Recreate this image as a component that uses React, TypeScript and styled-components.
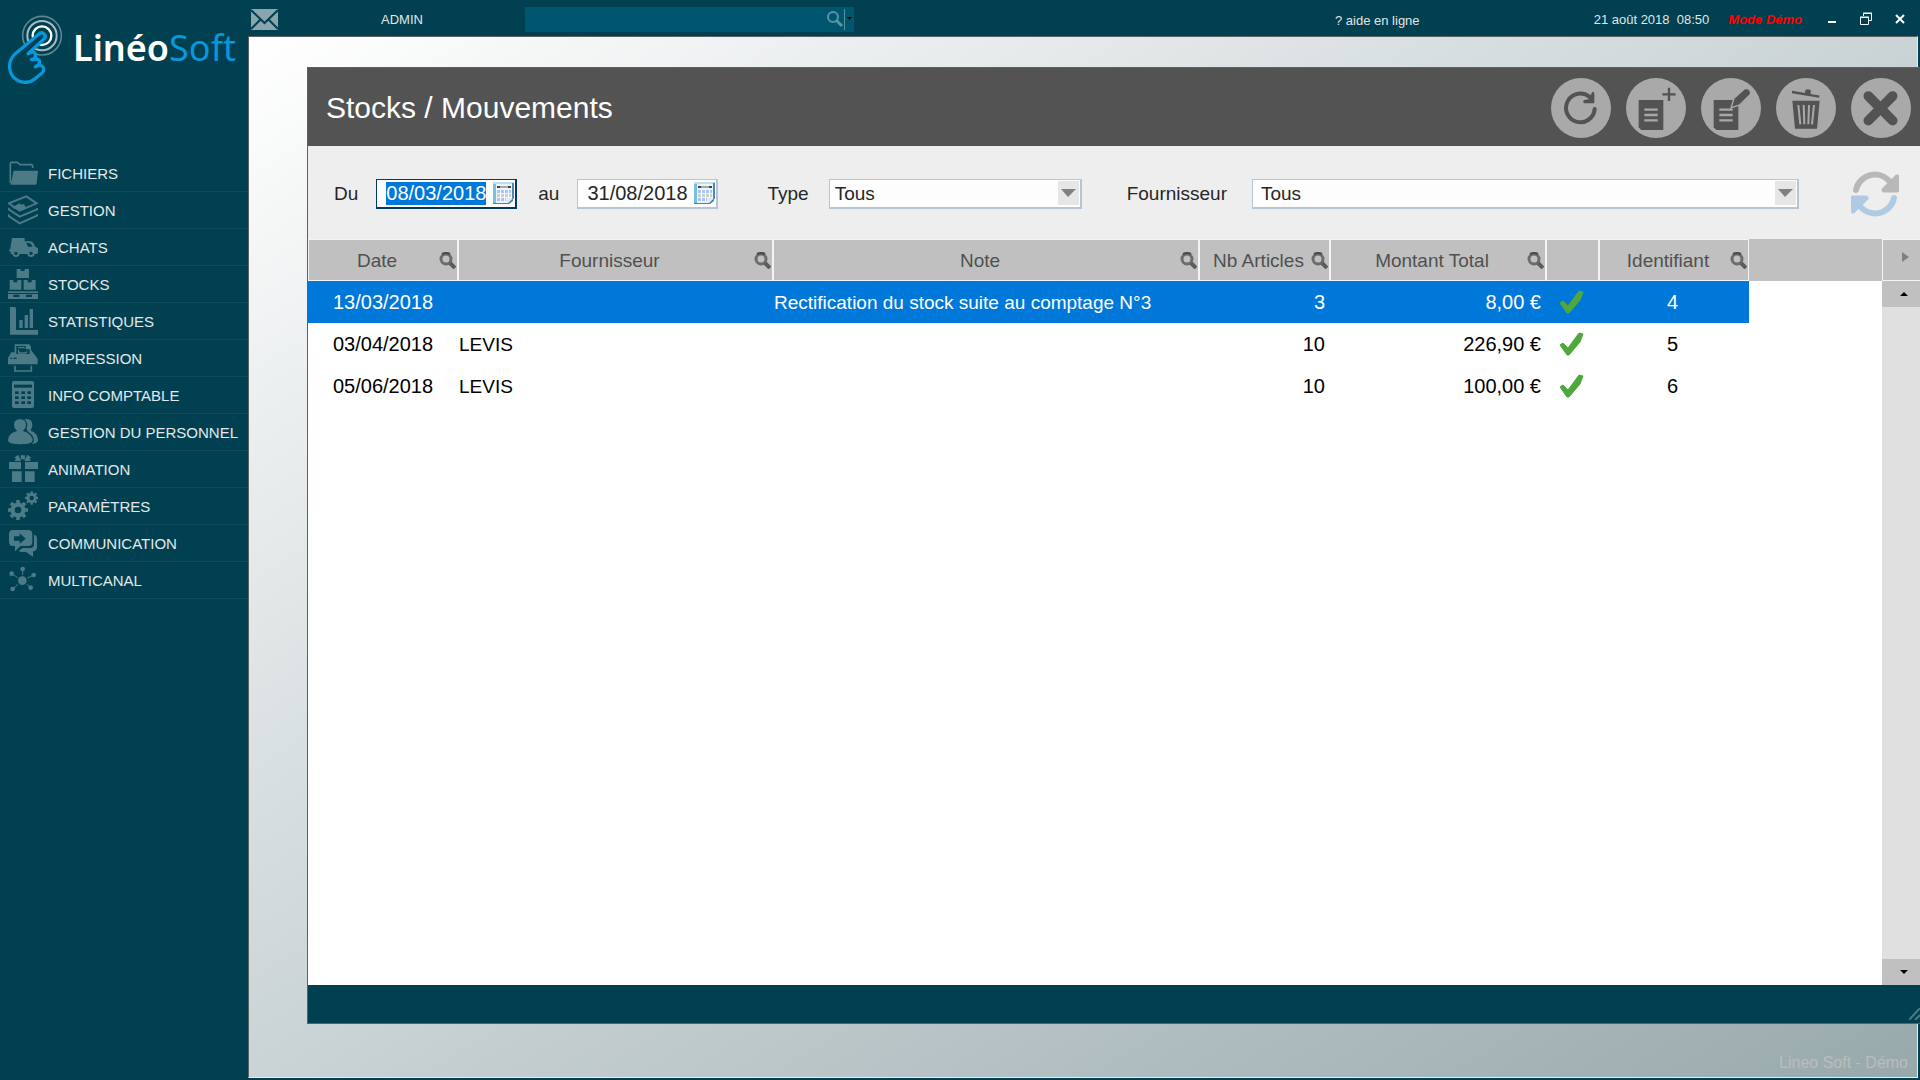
import React, { useEffect, useRef } from "react";
import styled, { createGlobalStyle, css } from "styled-components";

const color = {
  petrol: "#004050",
  petrolLine: "#0d4b5b",
  sideIcon: "#4d7a87",
  edge: "#5c6163",
  bar: "#535353",
  panel: "#eeeeee",
  grid: "#c0c0c0",
  gridText: "#505050",
  select: "#0078d9",
  field: "#b7c4d1",
};

const GlobalStyle = createGlobalStyle`
  * { box-sizing: border-box; }
  body {
    margin: 0;
    background: ${color.petrol};
    font-family: "Liberation Sans", Arial, sans-serif;
    overflow: hidden;
  }
  button {
    font: inherit;
    color: inherit;
    border: 0;
    padding: 0;
    background: none;
    cursor: pointer;
  }
  svg { display: block; }
`;

/* ---------- shell ---------- */

const Shell = styled.div`
  display: grid;
  grid-template-columns: 248px minmax(0, 1fr);
  min-height: 100vh;
`;

const Main = styled.div`
  display: flex;
  flex-direction: column;
  min-width: 0;
`;

/* ---------- sidebar ---------- */

const Sidebar = styled.aside`
  display: flex;
  flex-direction: column;
`;

const Brand = styled.div`
  display: flex;
  align-items: flex-start;
  gap: 9px;
  height: 155px;
  padding: 14px 0 0 7px;
`;

const BrandName = styled.div`
  padding-top: 8px;
  font-family: "Noto Sans", "Open Sans", sans-serif;
  font-size: 36px;
  line-height: 52px;
  font-weight: 600;
  color: #fff;
`;

const BrandAccent = styled.span`
  font-weight: 400;
  color: #0797db;
`;

const Menu = styled.nav`
  display: flex;
  flex-direction: column;
`;

const MenuItem = styled.a`
  display: flex;
  align-items: center;
  gap: 10px;
  height: 37px;
  padding-left: 8px;
  border-bottom: 1px solid ${color.petrolLine};
  color: #e4e8ea;
  font-size: 15px;
  text-decoration: none;
  white-space: nowrap;
`;

/* ---------- top bar ---------- */

const TopBar = styled.header`
  display: flex;
  align-items: center;
  height: 36px;
  padding: 2px 15px 0 3px;
  color: #e0e6e8;
  font-size: 13px;
`;

const UserName = styled.span`
  width: 144px;
  margin-left: 103px;
`;

const SearchBox = styled.label`
  display: flex;
  align-items: center;
  width: 329px;
  height: 25px;
  background: #00566e;
`;

const SearchInput = styled.input`
  flex: 1;
  min-width: 0;
  height: 100%;
  padding: 0 8px;
  border: 0;
  outline: 0;
  background: transparent;
  color: #fff;
  font: inherit;
`;

const HelpLink = styled.a`
  margin: 2px auto 0 481px;
  color: inherit;
  text-decoration: none;
`;

const Clock = styled.time`
  margin-right: 19px;
  white-space: pre;
`;

const DemoMode = styled.strong`
  margin-right: 25px;
  color: #ff0000;
  font-style: italic;
`;

const WindowButtons = styled.div`
  display: flex;
  gap: 22px;
`;

/* ---------- work area ---------- */

const Workspace = styled.main`
  flex: 1;
  display: flex;
  flex-direction: column;
  margin: 0 2px 2px 0;
  padding: 30px 0 0 58px;
  border: 1px solid ${color.edge};
  border-right-color: #e8eef0;
  border-bottom-color: #e8eef0;
  background: linear-gradient(to bottom right, #ffffff, #cad3d5 50%, #98a9ac);
`;

const Watermark = styled.footer`
  height: 53px;
  padding-right: 9px;
  color: #bcbcbc;
  font-size: 16px;
  line-height: 78px;
  text-align: right;
`;

const Panel = styled.section`
  flex: 1;
  display: flex;
  flex-direction: column;
  margin-right: -3px;
  border: 1px solid ${color.edge};
  border-right: 0;
  background: #fff;
`;

const PanelHeader = styled.div`
  display: flex;
  align-items: center;
  justify-content: space-between;
  height: 78px;
  padding: 1px 9px 0 18px;
  background: ${color.bar};
`;

const PanelTitle = styled.h1`
  margin: 0;
  color: #fff;
  font-size: 30px;
  font-weight: 400;
`;

const ActionGroup = styled.div`
  display: flex;
  gap: 15px;
`;

const RoundButton = styled.button`
  width: 60px;
  height: 60px;
  border-radius: 50%;
  background: #a9a9a9;
`;

const PanelFooter = styled.div`
  display: flex;
  align-items: flex-end;
  justify-content: flex-end;
  height: 38px;
  padding-bottom: 3px;
  background: ${color.petrol};
`;

/* ---------- filters ---------- */

const Filters = styled.form`
  display: flex;
  align-items: center;
  height: 93px;
  padding: 2px 21px 0 26px;
  background: ${color.panel};
  color: #262626;
  font-size: 19px;
`;

const FilterGroup = styled.div<{ $gap: number; $after: number; $grow?: boolean }>`
  display: flex;
  align-items: center;
  gap: ${(p) => p.$gap}px;
  margin-right: ${(p) => p.$after}px;
  flex: ${(p) => (p.$grow ? "1" : "none")};
`;

const fieldFrame = css<{ $active?: boolean }>`
  height: 30px;
  border: solid ${(p) => (p.$active ? "#053a5f" : color.field)};
  border-width: 1px 2px 2px 1px;
  background: #fdfdfd;
`;

const DateField = styled.div<{ $active?: boolean }>`
  ${fieldFrame}
  display: flex;
  align-items: center;
  width: 141px;
`;

const DateInput = styled.input`
  flex: 1;
  min-width: 0;
  height: 23px;
  padding: 0 0 0 9px;
  border: 0;
  outline: 0;
  background: transparent;
  color: #262626;
  font: 20px "Liberation Sans", Arial, sans-serif;
  &::selection {
    background: ${color.select};
    color: #fff;
  }
`;

const SelectField = styled.div<{ $wide?: boolean }>`
  ${fieldFrame}
  display: grid;
  flex: ${(p) => (p.$wide ? "1" : "none")};
  width: ${(p) => (p.$wide ? "auto" : "253px")};
`;

const Select = styled.select<{ $indent: number }>`
  grid-area: 1 / 1;
  appearance: none;
  width: 100%;
  padding: 0 30px 0 ${(p) => p.$indent}px;
  border: 0;
  outline: 0;
  background: transparent;
  color: #262626;
  font: 19px "Liberation Sans", Arial, sans-serif;
`;

const SelectArrow = styled.span`
  grid-area: 1 / 1;
  place-self: center end;
  display: grid;
  place-items: center;
  width: 21px;
  height: 24px;
  margin-right: 1px;
  background: #e6e6e6;
  pointer-events: none;
`;

/* ---------- table ---------- */

const TableArea = styled.div`
  flex: 1;
  display: flex;
`;

const TableScroll = styled.div`
  flex: 1;
  min-width: 0;
`;

const Table = styled.table`
  width: 100%;
  table-layout: fixed;
  border-collapse: separate;
  border-spacing: 0;
  font-size: 19px;
`;

const HeadCell = styled.th<{ $filler?: boolean }>`
  height: 42px;
  padding: 0;
  border: ${(p) => (p.$filler ? "0" : "1px solid #f4f4f4")};
  background: ${color.grid};
  color: ${color.gridText};
  font-weight: 400;
  white-space: nowrap;
`;

const HeadContent = styled.div`
  display: flex;
  align-items: center;
  padding: 1px 1px 0 6px;
`;

const HeadLabel = styled.span`
  flex: 1;
  text-align: center;
`;

const Row = styled.tr<{ $selected: boolean }>`
  color: ${(p) => (p.$selected ? "#fff" : "#000")};
  td:not(:last-child) {
    background: ${(p) => (p.$selected ? color.select : "#fff")};
  }
`;

const Cell = styled.td<{ $kind: "date" | "text" | "number" | "center" }>`
  height: 42px;
  white-space: nowrap;
  font-size: ${(p) => (p.$kind === "text" ? 19 : 20)}px;
  text-align: ${(p) => (p.$kind === "number" ? "right" : p.$kind === "center" ? "center" : "left")};
  padding: ${(p) => ({ date: "0 0 0 25px", text: "1px 0 0 1px", number: "0 5px 0 0", center: "0 3px 0 0" })[p.$kind]};
  svg { margin: 0 auto; }
`;

const ScrollColumn = styled.div`
  display: flex;
  flex-direction: column;
  width: 38px;
  background: #e0e0e0;
`;

const Corner = styled.button`
  display: grid;
  place-items: center;
  height: 42px;
  padding: 0 0 6px 8px;
  border: solid #f4f4f4;
  border-width: 1px 0 1px 1px;
  background: ${color.grid};
`;

const ScrollButton = styled.button<{ $end?: boolean }>`
  display: grid;
  place-items: center;
  height: 26px;
  padding-left: 5px;
  margin-top: ${(p) => (p.$end ? "auto" : "0")};
  background: ${color.grid};
`;

/* ---------- drawings ---------- */

const Logo = () => (
  <svg width="57" height="72" viewBox="21 39 171 216" fill="none" aria-hidden="true">
    <circle cx="126" cy="104" r="58" stroke="#5b8590" strokeWidth="5" />
    <circle cx="126" cy="104" r="44" stroke="#a5bcc3" strokeWidth="6" />
    <circle cx="126" cy="104" r="28" stroke="#fff" strokeWidth="7" />
    <path
      d="M117 98 L44 160 C20 184 26 216 44 232 C62 248 88 248 104 234 L126 216 C136 208 132 194 121 193 C112 192 108 199 106 199 C124 190 122 176 112 174 C104 172 98 178 96 178 C112 166 108 152 97 152 C90 152 86 160 84 158 L133 114 C142 104 128 90 117 98 Z"
      fill={color.petrol}
    />
    <path
      d="M84 158 L133 113 C141 104 129 90 118 98 L44 160 C22 182 26 214 42 230 C60 248 88 248 104 234 L126 216 C135 207 130 194 120 193 L106 197 M106 197 C122 190 122 178 112 174 L94 175 M98 176 C110 166 108 155 98 152 L84 158"
      stroke="#0797db"
      strokeWidth="10"
      strokeLinecap="round"
      strokeLinejoin="round"
    />
  </svg>
);

const SideIcon = ({ children }: { children: React.ReactNode }) => (
  <svg width="30" height="30" viewBox="0 0 90 90" fill={color.sideIcon} aria-hidden="true">
    {children}
  </svg>
);

const line = { fill: "none", stroke: color.sideIcon };
const cut = { fill: color.petrol };

const Gear = ({ x, y, r }: { x: number; y: number; r: number }) => (
  <g>
    {[0, 45, 90, 135].map((a) => (
      <rect
        key={a}
        x={x - r * 0.18}
        y={y - r}
        width={r * 0.36}
        height={r * 2}
        transform={`rotate(${a} ${x} ${y})`}
      />
    ))}
    <circle cx={x} cy={y} r={r * 0.76} />
    <circle cx={x} cy={y} r={r * 0.33} {...cut} />
  </g>
);

const menu: { label: string; icon: React.ReactNode }[] = [
  {
    label: "FICHIERS",
    icon: (
      <>
        <path d="M7 76V17q0-4 4-4h17l8 7h33q5 0 5 5v5" {...line} strokeWidth="5" />
        <path d="M17 38h73l-4 38q-1 4-4 4H8z" />
      </>
    ),
  },
  {
    label: "GESTION",
    icon: (
      <>
        <path d="M2 25L55 4l31 21-51 22z" {...line} strokeWidth="6" />
        <path d="M12 38l22-13 6 4 8-2 6 12-18 8z" />
        <path d="M2 38v5l33 22 52-22v-4M2 58v5l33 22 52-23v-4" {...line} strokeWidth="6" />
      </>
    ),
  },
  {
    label: "ACHATS",
    icon: (
      <>
        <path d="M12 18h38v10h18q5 0 8 5l6 12q10 2 10 9v8h-4v4H8v-8H3v-4q4-2 4-6z" />
        <path d="M55 33h9q5 0 10 11H60z" {...cut} />
        <circle cx="24" cy="64" r="11" />
        <circle cx="24" cy="64" r="5" {...cut} />
        <circle cx="69" cy="64" r="11" />
        <circle cx="69" cy="64" r="5" {...cut} />
      </>
    ),
  },
  {
    label: "STOCKS",
    icon: (
      <>
        <path d="M26 0h12v6h12V0h13v27H26zM5 33h11v7h12v-7h12v29H5zM47 33h12v7h12v-7h12v29H47z" />
        <path d="M0 67h90v23H0z" />
        <path d="M0 72h90v3H0zM16 77h18v7H16zM54 77h18v7H54z" {...cut} />
      </>
    ),
  },
  {
    label: "STATISTIQUES",
    icon: <path d="M6 3h13q5 0 5 5v64h66v14H6zM34 42h10v24H34zM50 27h10v39H50zM65 9h10v57H65z" />,
  },
  {
    label: "IMPRESSION",
    icon: (
      <>
        <path d="M20 4h44l5 7v10l20 26v17H0V45l10-17h10z" />
        <path d="M25 9h28v10h12v14H25z" {...cut} />
        <path d="M30 14h20M32 20v10h20l6-4" {...line} strokeWidth="4" />
        <path d="M7 44h5v4H7zM16 44h10v4H16z" {...cut} />
        <path d="M21 68v16h49V68" {...line} strokeWidth="5" />
      </>
    ),
  },
  {
    label: "INFO COMPTABLE",
    icon: (
      <>
        <rect x="12" y="3" width="66" height="81" rx="6" />
        <path d="M18 14h54v9H18z" {...cut} />
        {[34, 49, 64].map((y) =>
          [21, 40, 58].map((x) => <rect key={`${x}-${y}`} x={x} y={y} width="11" height="8" {...cut} />)
        )}
      </>
    ),
  },
  {
    label: "GESTION DU PERSONNEL",
    icon: (
      <>
        <path d="M46 8c18-6 28 4 27 17 0 9-6 12-4 17 14 4 21 15 21 28 0 6-6 10-18 11z" />
        <path
          d="M36 5c12 0 20 8 20 19 0 7-3 13-8 17 17 5 28 18 28 29 0 11-16 14-38 14S-2 82-2 70c0-13 10-24 26-29-5-4-8-10-8-17C16 13 24 5 36 5z"
          stroke={color.petrol}
          strokeWidth="4"
        />
      </>
    ),
  },
  {
    label: "ANIMATION",
    icon: (
      <path d="M3 24h36v21H3zM51 24h39v21H51zM12 52h29v32H12zM51 52h29v32H51zM38 4h13v12H38zM31 2l8 19H20l4-8-6-2zM58 2l12 9-6 3 5 7H49z" />
    ),
  },
  {
    label: "PARAMÈTRES",
    icon: (
      <>
        <Gear x={30} y={57} r={30} />
        <Gear x={71} y={21} r={20} />
      </>
    ),
  },
  {
    label: "COMMUNICATION",
    icon: (
      <>
        <path d="M78 20q9 2 9 12v26q0 11-12 12v16L54 72H38l-6-4 12-8h22q12 0 12-12z" />
        <path d="M15 6h46q12 0 12 12v24q0 12-12 12H38L21 70V54h-6Q3 54 3 42V18Q3 6 15 6z" />
        <path d="M18 25h17V16l18 16-18 15v-9H18z" {...cut} />
      </>
    ),
  },
  {
    label: "MULTICANAL",
    icon: (
      <>
        <path d="M44 12v35M11 26l32 21M77 30L43 47M14 72l29-25M68 68L43 47" {...line} strokeWidth="3" />
        <circle cx="43" cy="47" r="17" {...cut} />
        <circle cx="43" cy="47" r="13" />
        {[[44, 12], [11, 26], [77, 30], [14, 72], [68, 68]].map(([x, y]) => (
          <circle key={x} cx={x} cy={y} r="7" />
        ))}
      </>
    ),
  },
];

const MailIcon = () => (
  <svg width="27" height="21" viewBox="0 0 27 21" aria-hidden="true">
    <path d="M0 0h27v21H0z" fill="#8aa5ae" />
    <path d="M0 1l13.500 13L27 1M0 20l10-10M27 20L17 10" fill="none" stroke={color.petrol} strokeWidth="2" />
  </svg>
);

const SearchIcon = () => (
  <svg width="27" height="21" viewBox="0 0 27 21" fill="none" aria-hidden="true">
    <circle cx="6" cy="8" r="5" stroke="#5b93a3" strokeWidth="2" />
    <path d="M9 11l6 6" stroke="#5b93a3" strokeWidth="3" />
    <path d="M17.500 0v21" stroke="#5b93a3" />
    <path d="M20 8h5l-2.500 3z" fill="#000" />
  </svg>
);

const ColumnSearchIcon = () => (
  <svg width="17" height="17" viewBox="0 0 17 17" fill="none" aria-hidden="true">
    <circle cx="7" cy="7" r="5" stroke="#6c6c6c" strokeWidth="3" />
    <path d="M3 2q4-2 8 0" stroke="#4a4a4a" strokeWidth="2" />
    <path d="M11 11l5 5" stroke="#5c5c5c" strokeWidth="4" />
  </svg>
);

const CalendarIcon = () => (
  <svg width="22" height="23" viewBox="0 0 22 23" aria-hidden="true">
    <path d="M1 0h20v17l-5 5H1z" fill="#eef5fa" />
    <path d="M0 0h3v22H0z" fill="#79bfe4" />
    <path d="M0 0h21v2H0z" fill="#bcdff0" />
    <path d="M19 1h2v16h-2z" fill="#4f88b8" />
    <path d="M0 21h15l5-5v3l-4 3H0z" fill="#4b7fae" />
    <path d="M4 4h14v2H4z" fill="#a9a9a9" />
    <path d="M4 4h3v2H4zM15 4h3v2h-3z" fill="#444" />
    <path d="M4 8h14v3H4z" fill="#a5c6fb" />
    <path d="M4 12h14v3H4z" fill="#cfcfcf" />
    <path d="M4 16h9v3H4z" fill="#a5c6fb" />
    <path d="M7.500 8v12M11.500 8v12M15.500 8v8" stroke="#fff" />
    <path d="M14 21v-5h6z" fill="#dfe9f2" />
  </svg>
);

const RefreshIcon = () => (
  <svg width="48" height="48" viewBox="0 0 48 48" fill="none" strokeLinecap="round" aria-hidden="true">
    <path d="M5 20C8 4 31-3 42 16" stroke="#b8b8b8" strokeWidth="6" />
    <path d="M46 7v13H33M45 8L34 19" stroke="#b8b8b8" strokeWidth="5" strokeLinejoin="round" />
    <path d="M43 28C40 44 17 51 6 32" stroke="#b0cae4" strokeWidth="6" />
    <path d="M2 41V28h13M3 40l11-11" stroke="#b0cae4" strokeWidth="5" strokeLinejoin="round" />
  </svg>
);

const CheckIcon = () => (
  <svg width="25" height="24" viewBox="0 0 25 24" fill="none" aria-hidden="true">
    <path d="M1 13l3-2 5 5L20 1l4 1-3 8-11 13H8z" fill="#4fa83e" stroke="#4fa83e" strokeLinejoin="round" />
  </svg>
);

const Triangle = ({ d, w, h, fill }: { d: string; w: number; h: number; fill: string }) => (
  <svg width={w} height={h} viewBox={`0 0 ${w} ${h}`} aria-hidden="true">
    <path d={d} fill={fill} />
  </svg>
);

/* Glyphs of the round buttons share one 180-unit square. */
const Sheet = ({ children }: { children?: React.ReactNode }) => (
  <>
    <path d="M38 66h74v90H46l-8-8z" fill={color.bar} />
    <path d="M55 95h40M55 111h40M55 127h40" stroke="#a9a9a9" strokeWidth="7" />
    {children}
  </>
);

const actions: { label: string; glyph: React.ReactNode }[] = [
  {
    label: "Actualiser",
    glyph: (
      <>
        <path d="M131 93a43 43 0 1 1-14-35" fill="none" stroke={color.bar} strokeWidth="12" strokeLinecap="round" />
        <path d="M124 41q6 0 6 5v30H99q-5-7 1-10l13-2z" fill={color.bar} />
      </>
    ),
  },
  {
    label: "Nouveau",
    glyph: (
      <Sheet>
        <path d="M129 29v40M109 49h40" stroke={color.bar} strokeWidth="7" />
      </Sheet>
    ),
  },
  {
    label: "Modifier",
    glyph: (
      <Sheet>
        <path d="M90 90l9-29 31-28q9-4 16 3 6 7 1 14l-31 31z" fill={color.bar} stroke="#a9a9a9" strokeWidth="4" />
      </Sheet>
    ),
  },
  {
    label: "Supprimer",
    glyph: (
      <>
        <path d="M48 42l82 14M91 39q4-4 10 0l-1 9-10-2z" stroke={color.bar} strokeWidth="7" fill={color.bar} />
        <path d="M49 68h82l-8 84H57z" fill={color.bar} />
        <path d="M67 81l6 58M83 81l2 58M99 81l-2 58M114 81l-6 58" stroke="#a9a9a9" strokeWidth="6" />
      </>
    ),
  },
  {
    label: "Fermer",
    glyph: <path d="M52 54l73 74M125 54l-73 74" stroke={color.bar} strokeWidth="29" strokeLinecap="round" />,
  },
];

/* ---------- data ---------- */

const columns = [
  { key: "date", label: "Date", width: 150 },
  { key: "supplier", label: "Fournisseur", width: 315 },
  { key: "note", label: "Note", width: 426 },
  { key: "count", label: "Nb Articles", width: 131 },
  { key: "amount", label: "Montant Total", width: 216 },
  { key: "state", label: "", width: 53 },
  { key: "id", label: "Identifiant", width: 150 },
];

const rows = [
  { date: "13/03/2018", supplier: "", note: "Rectification du stock suite au comptage N°3", count: 3, amount: "8,00 €", id: 4 },
  { date: "03/04/2018", supplier: "LEVIS", note: "", count: 10, amount: "226,90 €", id: 5 },
  { date: "05/06/2018", supplier: "LEVIS", note: "", count: 10, amount: "100,00 €", id: 6 },
];

export default function App() {
  const from = useRef<HTMLInputElement>(null);
  useEffect(() => {
    from.current?.focus();
    from.current?.select();
  }, []);

  return (
    <>
      <GlobalStyle />
      <Shell>
        <Sidebar>
          <Brand>
            <Logo />
            <BrandName>
              Linéo<BrandAccent>Soft</BrandAccent>
            </BrandName>
          </Brand>
          <Menu>
            {menu.map((m) => (
              <MenuItem key={m.label} href="#">
                <SideIcon>{m.icon}</SideIcon>
                {m.label}
              </MenuItem>
            ))}
          </Menu>
        </Sidebar>

        <Main>
          <TopBar>
            <button aria-label="Messages"><MailIcon /></button>
            <UserName>ADMIN</UserName>
            <SearchBox>
              <SearchInput type="text" aria-label="Recherche" />
              <SearchIcon />
            </SearchBox>
            <HelpLink href="#">? aide en ligne</HelpLink>
            <Clock>{"21 août 2018  08:50"}</Clock>
            <DemoMode>Mode Démo</DemoMode>
            <WindowButtons>
              <button aria-label="Réduire">
                <svg width="10" height="14" viewBox="0 0 10 14"><path d="M1 9h8v2H1z" fill="#fff" /></svg>
              </button>
              <button aria-label="Restaurer">
                <svg width="14" height="14" viewBox="0 0 14 14" fill="none" stroke="#fff">
                  <path d="M1.500 5.500h8v7h-8zM1 5h9M4.500 4V1.500h8v7H10M4 1h9" />
                </svg>
              </button>
              <button aria-label="Quitter">
                <svg width="10" height="14" viewBox="0 0 10 14"><path d="M1 3l8 8M9 3l-8 8" stroke="#fff" strokeWidth="2" /></svg>
              </button>
            </WindowButtons>
          </TopBar>

          <Workspace>
            <Panel>
              <PanelHeader>
                <PanelTitle>Stocks / Mouvements</PanelTitle>
                <ActionGroup>
                  {actions.map((a) => (
                    <RoundButton key={a.label} aria-label={a.label}>
                      <svg width="60" height="60" viewBox="0 0 180 180" aria-hidden="true">{a.glyph}</svg>
                    </RoundButton>
                  ))}
                </ActionGroup>
              </PanelHeader>

              <Filters>
                <FilterGroup $gap={18} $after={21}>
                  <label htmlFor="from">Du</label>
                  <DateField $active>
                    <DateInput id="from" ref={from} type="text" defaultValue="08/03/2018" />
                    <button type="button" aria-label="Choisir la date de début"><CalendarIcon /></button>
                  </DateField>
                </FilterGroup>
                <FilterGroup $gap={18} $after={49}>
                  <label htmlFor="to">au</label>
                  <DateField>
                    <DateInput id="to" type="text" defaultValue="31/08/2018" />
                    <button type="button" aria-label="Choisir la date de fin"><CalendarIcon /></button>
                  </DateField>
                </FilterGroup>
                <FilterGroup $gap={20} $after={45}>
                  <label htmlFor="type">Type</label>
                  <SelectField>
                    <Select id="type" $indent={5}><option>Tous</option></Select>
                    <SelectArrow><Triangle w={15} h={8} d="M0 0h15L7 8z" fill="#808080" /></SelectArrow>
                  </SelectField>
                </FilterGroup>
                <FilterGroup $gap={25} $after={52} $grow>
                  <label htmlFor="supplier">Fournisseur</label>
                  <SelectField $wide>
                    <Select id="supplier" $indent={8}><option>Tous</option></Select>
                    <SelectArrow><Triangle w={15} h={8} d="M0 0h15L7 8z" fill="#808080" /></SelectArrow>
                  </SelectField>
                </FilterGroup>
                <button type="button" aria-label="Rafraîchir la liste"><RefreshIcon /></button>
              </Filters>

              <TableArea>
                <TableScroll>
                  <Table>
                    <colgroup>
                      {columns.map((c) => <col key={c.key} width={c.width} />)}
                      <col />
                    </colgroup>
                    <thead>
                      <tr>
                        {columns.map((c) => (
                          <HeadCell key={c.key} scope="col">
                            {c.label && (
                              <HeadContent>
                                <HeadLabel>{c.label}</HeadLabel>
                                <button aria-label={`Rechercher ${c.label}`}><ColumnSearchIcon /></button>
                              </HeadContent>
                            )}
                          </HeadCell>
                        ))}
                        <HeadCell as="td" $filler />
                      </tr>
                    </thead>
                    <tbody>
                      {rows.map((r, i) => (
                        <Row key={r.id} $selected={i === 0}>
                          <Cell $kind="date">{r.date}</Cell>
                          <Cell $kind="text">{r.supplier}</Cell>
                          <Cell $kind="text">{r.note}</Cell>
                          <Cell $kind="number">{r.count}</Cell>
                          <Cell $kind="number">{r.amount}</Cell>
                          <Cell $kind="center"><CheckIcon /></Cell>
                          <Cell $kind="center">{r.id}</Cell>
                          <td />
                        </Row>
                      ))}
                    </tbody>
                  </Table>
                </TableScroll>
                <ScrollColumn>
                  <Corner aria-label="Colonnes suivantes">
                    <Triangle w={7} h={10} d="M0 0l7 5-7 5z" fill="#808080" />
                  </Corner>
                  <ScrollButton aria-label="Défiler vers le haut">
                    <Triangle w={8} h={4} d="M0 4l4-4 4 4z" fill="#000" />
                  </ScrollButton>
                  <ScrollButton $end aria-label="Défiler vers le bas">
                    <Triangle w={8} h={4} d="M0 0h8L4 4z" fill="#000" />
                  </ScrollButton>
                </ScrollColumn>
              </TableArea>

              <PanelFooter>
                <svg width="11" height="12" viewBox="0 0 11 12" stroke="#4d7a87" strokeWidth="2" aria-hidden="true">
                  <path d="M0 12L11 0M6 12l5-5" />
                </svg>
              </PanelFooter>
            </Panel>
            <Watermark>Lineo Soft - Démo</Watermark>
          </Workspace>
        </Main>
      </Shell>
    </>
  );
}
